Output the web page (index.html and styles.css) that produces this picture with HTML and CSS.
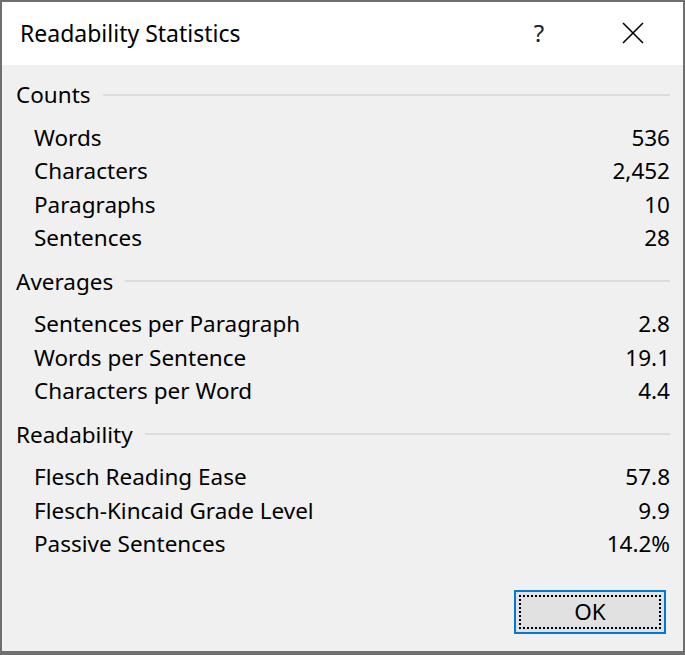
FILE: index.html
```html
<!DOCTYPE html>
<html>
<head>
<meta charset="utf-8">
<link rel="stylesheet" href="styles.css">
</head>
<body>
<div class="window">
  <div class="titlebar">
    <span class="title">Readability Statistics</span>
    <span class="help">?</span>
    <span class="close">
      <svg width="24" height="24" viewBox="0 0 24 24"><path d="M2 2 L22 22 M22 2 L2 22" stroke="#000" stroke-width="1.6" fill="none"/></svg>
    </span>
  </div>
  <div class="content">
    <section class="group">
      <div class="group-head"><span>Counts</span><span class="rule"></span></div>
      <div class="row"><span>Words</span><span>536</span></div>
      <div class="row"><span>Characters</span><span>2,452</span></div>
      <div class="row"><span>Paragraphs</span><span>10</span></div>
      <div class="row"><span>Sentences</span><span>28</span></div>
    </section>
    <section class="group">
      <div class="group-head"><span>Averages</span><span class="rule"></span></div>
      <div class="row"><span>Sentences per Paragraph</span><span>2.8</span></div>
      <div class="row"><span>Words per Sentence</span><span>19.1</span></div>
      <div class="row"><span>Characters per Word</span><span>4.4</span></div>
    </section>
    <section class="group">
      <div class="group-head"><span>Readability</span><span class="rule"></span></div>
      <div class="row"><span>Flesch Reading Ease</span><span>57.8</span></div>
      <div class="row"><span>Flesch-Kincaid Grade Level</span><span>9.9</span></div>
      <div class="row"><span>Passive Sentences</span><span>14.2%</span></div>
    </section>
    <div class="actions">
      <button class="ok"><span class="focus">OK</span></button>
    </div>
  </div>
</div>
</body>
</html>
```
FILE: styles.css
```css
html, body {
  margin: 0;
  padding: 0;
  background: #ffffff;
}
.window {
  width: 685px;
  height: 655px;
  box-sizing: border-box;
  border: 2px solid #6f6f6f;
  border-bottom-width: 4px;
  background: #f0f0f0;
  display: flex;
  flex-direction: column;
  font-family: "Noto Sans", "Open Sans", sans-serif;
  color: #000;
}
.titlebar {
  height: 63px;
  background: #fff;
  display: flex;
  align-items: center;
  padding-left: 18px;
  flex: none;
}
.title {
  font-size: 23px;
  flex: 1;
  padding-bottom: 2px;
}
.help {
  font-size: 24px;
  width: 24px;
  text-align: center;
  margin-right: 70px;
  color: #222;
  padding-bottom: 2px;
}
.close {
  display: flex;
  width: 24px;
  height: 24px;
  margin-right: 38px;
  margin-bottom: 2px;
}
.content {
  flex: 1;
  display: flex;
  flex-direction: column;
  padding: 13px 13px 0 14px;
  gap: 10px;
}
.group {
  display: flex;
  flex-direction: column;
}
.group-head {
  display: flex;
  align-items: center;
  font-size: 22.5px;
  line-height: 33.5px;
  margin-bottom: 9px;
}
.rule {
  flex: 1;
  height: 2px;
  background: #dcdcdc;
  margin-left: 12px;
}
.row {
  display: flex;
  justify-content: space-between;
  font-size: 22.5px;
  line-height: 33.5px;
  padding-left: 18px;
}
.actions {
  display: flex;
  justify-content: flex-end;
  margin-top: 19px;
  padding-right: 4px;
}
.ok {
  width: 152px;
  height: 44px;
  border: 2px solid #0078d7;
  background: #e1e1e1;
  padding: 3px;
  margin: 0;
  font-family: inherit;
  display: flex;
}
.focus {
  flex: 1;
  border: 2px dotted #000;
  font-size: 22.5px;
  color: #000;
  display: flex;
  align-items: center;
  justify-content: center;
}
```
